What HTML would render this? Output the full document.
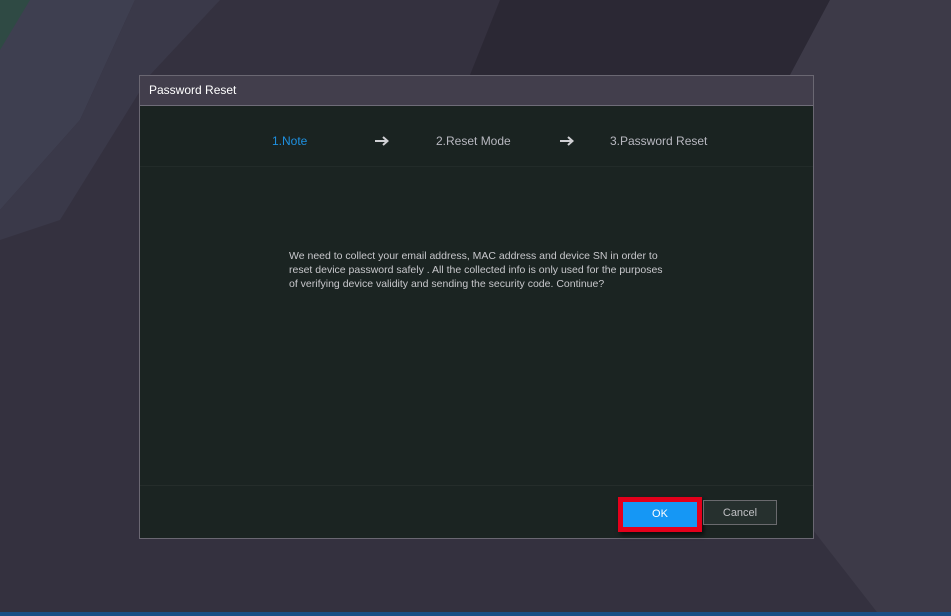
<!DOCTYPE html>
<html><head><style>
body{margin:0;width:951px;height:616px;overflow:hidden;background:#34313f;font-family:"Liberation Sans",sans-serif;position:relative}
.bg{position:absolute;left:0;top:0}
.dlg{position:absolute;left:139px;top:75px;width:675px;height:464px;border:1px solid #6a6772;background:#1b2422;box-sizing:border-box}
.hd{height:30px;background:#423e4c;border-bottom:1px solid #6f6c78;color:#fff;font-size:12px;line-height:29px;padding-left:9px;box-sizing:border-box}
.steps{position:absolute;top:30px;left:0;right:0;height:60px;background:#1a2321;border-bottom:1px solid #222b29;font-size:12px;color:#b8b8c0}
.steps span{position:absolute;top:28px}
.steps svg{position:absolute;top:29px}
.msg{position:absolute;left:149px;top:173px;white-space:nowrap;font-size:10.5px;line-height:14px;color:#c8c8cc}
.ft{position:absolute;left:0;right:0;top:409px;border-top:1px solid #252d2b}
.ok{position:absolute;left:478px;top:421px;width:74px;height:25px;border:5px solid #e3001b;box-sizing:content-box;box-shadow:2px 3px 4px rgba(0,0,0,.6)}
.ok div{background:#1597f5;height:25px;margin:0;color:#fff;font-size:11px;text-align:center;line-height:25px}
.cn{position:absolute;left:563px;top:424px;width:74px;height:25px;border:1px solid #6a6a6e;background:#26302e;color:#c0c0c4;font-size:11px;text-align:center;line-height:24px;box-sizing:border-box}
</style></head><body>
<svg class="bg" width="951" height="616">
<polygon points="0,0 135,0 80,120 0,210" fill="#3e3f50"/>
<polygon points="0,0 30,0 0,50" fill="#2f4a44"/>
<polygon points="135,0 220,0 150,75 60,220 0,240 0,210 80,120" fill="#3a3949"/>
<polygon points="500,0 830,0 790,75 470,75" fill="#2b2834"/>
<polygon points="830,0 951,0 951,616 880,616 813,530 813,75 790,75" fill="#3d3a48"/>
<rect x="0" y="612" width="951" height="4" fill="#1a4f85"/>
</svg>
<div class="dlg">
<div class="hd">Password Reset</div>
<div class="steps">
<span style="left:132px;color:#1e90e0">1.Note</span>
<svg style="left:234px" width="16" height="12" viewBox="0 0 16 12"><path d="M1 6H13M9 2L13.5 6L9 10" stroke="#d0d0d4" stroke-width="2" fill="none"/></svg>
<span style="left:296px">2.Reset Mode</span>
<svg style="left:419px" width="16" height="12" viewBox="0 0 16 12"><path d="M1 6H13M9 2L13.5 6L9 10" stroke="#d0d0d4" stroke-width="2" fill="none"/></svg>
<span style="left:470px">3.Password Reset</span>
</div>
<div class="msg">We need to collect your email address, MAC address and device SN in order to<br>reset device password safely . All the collected info is only used for the purposes<br>of verifying device validity and sending the security code. Continue?</div>
<div class="ft"></div>
<div class="ok"><div>OK</div></div>
<div class="cn">Cancel</div>
</div>
</body></html>
